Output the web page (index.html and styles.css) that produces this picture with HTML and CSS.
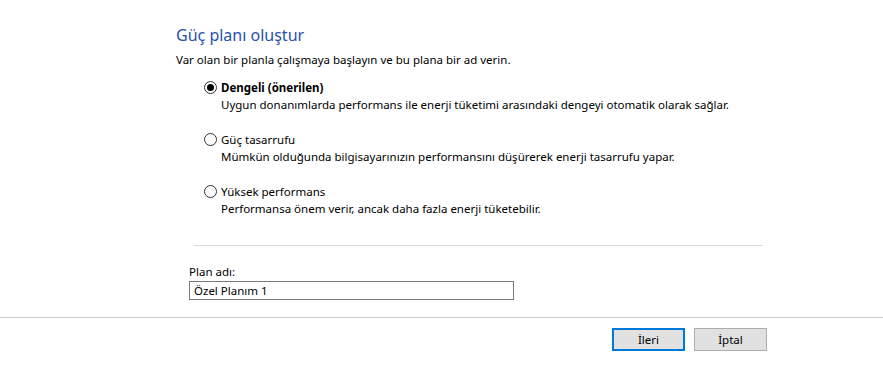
FILE: index.html
```html
<!DOCTYPE html>
<html lang="tr">
<head>
  <meta charset="UTF-8">
  <title>Güç planı oluştur</title>
  <link rel="stylesheet" href="styles.css">
</head>
<body>
  <div class="page">
    <div class="content">
      <h1 class="title">Güç planı oluştur</h1>
      <p class="intro">Var olan bir planla çalışmaya başlayın ve bu plana bir ad verin.</p>

      <div class="options">
        <div class="option">
          <div class="option-row">
            <span class="radio checked"></span>
            <span class="option-label bold">Dengeli (önerilen)</span>
          </div>
          <div class="option-desc">Uygun donanımlarda performans ile enerji tüketimi arasındaki dengeyi otomatik olarak sağlar.</div>
        </div>
        <div class="option">
          <div class="option-row">
            <span class="radio"></span>
            <span class="option-label">Güç tasarrufu</span>
          </div>
          <div class="option-desc">Mümkün olduğunda bilgisayarınızın performansını düşürerek enerji tasarrufu yapar.</div>
        </div>
        <div class="option">
          <div class="option-row">
            <span class="radio"></span>
            <span class="option-label">Yüksek performans</span>
          </div>
          <div class="option-desc">Performansa önem verir, ancak daha fazla enerji tüketebilir.</div>
        </div>
      </div>

      <div class="separator"></div>

      <div class="plan-name">
        <label class="plan-label" for="planName">Plan adı:</label>
        <input class="plan-input" id="planName" type="text" value="Özel Planım 1">
      </div>
    </div>

    <div class="footer">
      <button class="btn btn-default" type="button">İleri</button>
      <button class="btn" type="button">İptal</button>
    </div>
  </div>
</body>
</html>
```

FILE: styles.css
```css
body {
  margin: 0;
  background-color: #ffffff;
  font-family: 'Noto Sans', 'Open Sans', sans-serif;
  font-size: 11.5px;
  color: #000000;
}

.content {
  padding: 24px 0 0 176px;
}

.title {
  margin: 0;
  font-size: 16px;
  font-weight: normal;
  line-height: 22px;
  color: #1f52ad;
}

.intro {
  margin: 5px 0 0 0;
  line-height: 18px;
}

.options {
  margin-top: 9px;
  padding-left: 28px;
}

.option {
  margin-bottom: 16px;
}

.option:last-child {
  margin-bottom: 0;
}

.option-row {
  display: flex;
  align-items: center;
  height: 18px;
}

.radio {
  box-sizing: border-box;
  width: 13px;
  height: 13px;
  border: 1px solid #333333;
  border-radius: 50%;
  display: flex;
  align-items: center;
  justify-content: center;
  margin-right: 4px;
}

.radio.checked::after {
  content: '';
  width: 7px;
  height: 7px;
  border-radius: 50%;
  background-color: #000000;
}

.bold {
  font-weight: bold;
}

.option-desc {
  padding-left: 17px;
  line-height: 18px;
}

.separator {
  margin: 27px 0 0 18px;
  width: 569px;
  border-top: 1px solid #d9d9d9;
}

.plan-name {
  margin-top: 17px;
  padding-left: 13px;
}

.plan-label {
  display: block;
  line-height: 18px;
}

.plan-input {
  box-sizing: border-box;
  width: 325px;
  height: 19px;
  margin: 0;
  padding: 0 0 0 4px;
  border: 1px solid #7a7a7a;
  font-family: inherit;
  font-size: 11.5px;
  color: #000000;
  outline: none;
}

.footer {
  margin-top: 17px;
  border-top: 1px solid #d0d0d0;
  display: flex;
  justify-content: flex-end;
  gap: 9px;
  padding: 10px 116px 0 0;
}

.btn {
  box-sizing: border-box;
  width: 73px;
  height: 23px;
  background-color: #e1e1e1;
  border: 1px solid #adadad;
  font-family: inherit;
  font-size: 11.5px;
  color: #000000;
  padding: 0;
}

.btn-default {
  border: 2px solid #0078d7;
}
```
